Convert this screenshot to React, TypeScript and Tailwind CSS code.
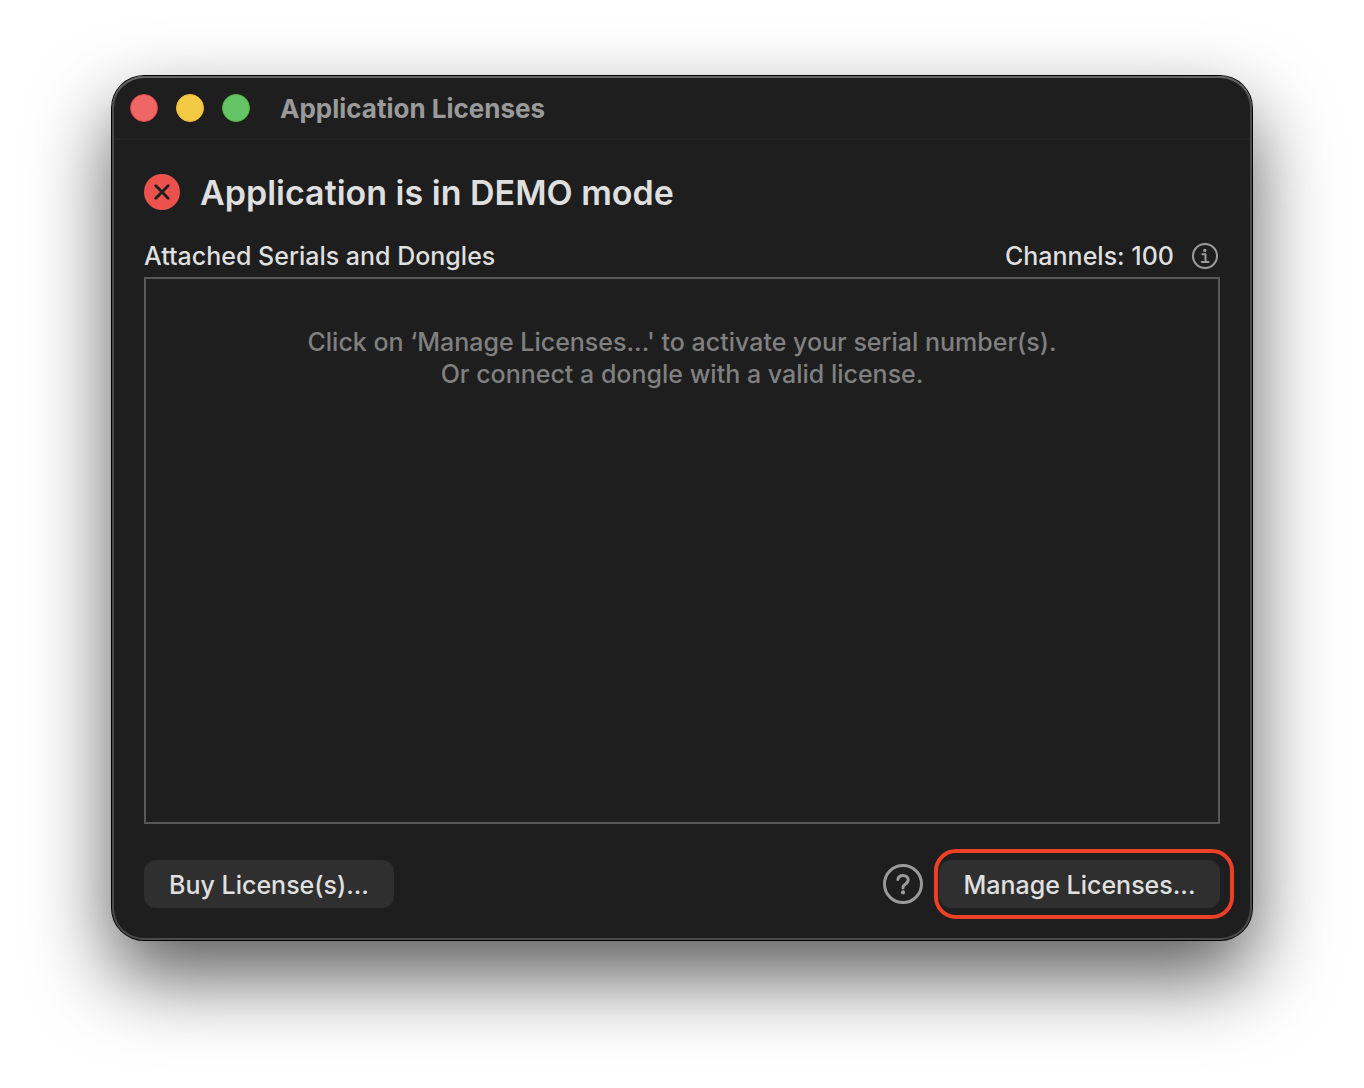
import React from 'react';

interface PushButtonProps {
  label: string;
  className?: string;
}

const trafficLights = [
  { label: 'Close', className: 'bg-[#ee6764] border-[#e0443e]' },
  { label: 'Minimize', className: 'bg-[#f4c943] border-[#efbd3b]' },
  { label: 'Zoom', className: 'bg-[#65c466] border-[#53b440]' },
];

const PushButton: React.FC<PushButtonProps> = ({ label, className = '' }) => (
  <button type="button" className={`h-12 rounded-xl bg-[#2f2f2f] pt-0.5 text-center whitespace-nowrap text-[#e0e0e0] ${className}`}>
    {label}
  </button>
);

const ErrorIcon: React.FC = () => (
  <svg viewBox="0 0 36 36" className="size-9 shrink-0" aria-hidden="true">
    <circle cx="18" cy="18" r="18" fill="#ec524d" />
    <path d="M11.8 11.8 L24.2 24.2 M24.2 11.8 L11.8 24.2" stroke="#1e1e1e" strokeWidth="2.8" strokeLinecap="round" />
  </svg>
);

const InfoIcon: React.FC = () => (
  <svg viewBox="0 0 26 26" className="size-[26px]" fill="none" aria-hidden="true">
    <circle cx="13" cy="13" r="12" stroke="#9c9c9c" strokeWidth="2" />
    <circle cx="12.8" cy="7.4" r="1.7" fill="#9c9c9c" />
    <path d="M10.4 11.2 H13.5 V19 M9.8 19.1 H16.6" stroke="#9c9c9c" strokeWidth="2" strokeLinecap="round" strokeLinejoin="round" />
  </svg>
);

const HelpIcon: React.FC = () => (
  <svg viewBox="0 0 40 40" className="size-10" fill="none" aria-hidden="true">
    <circle cx="20" cy="20" r="18.5" stroke="#9a9a9a" strokeWidth="3" />
    <path d="M14.9 15.6 C15.2 12.8 17.2 11.4 20 11.4 C23 11.4 25.2 13.1 25.2 15.8 C25.2 18 24 19.1 22.4 20.1 C20.7 21.1 20 21.9 20 23.6 V24" stroke="#9a9a9a" strokeWidth="3" strokeLinecap="round" strokeLinejoin="round" />
    <circle cx="20" cy="28.4" r="2.1" fill="#9a9a9a" />
  </svg>
);

const App: React.FC = () => {
  return (
    <div className="flex min-h-screen flex-col bg-white px-28 pt-19 pb-37 font-['Inter',sans-serif] text-[25px] leading-8 font-medium text-[#dfdfdf]">
      <div className="flex flex-1 flex-col rounded-[32px] bg-[#1e1e1e] shadow-[inset_0_2px_0_0_#666666,inset_0_0_0_2px_#4b4b4b,0_0_0_1px_#000000,0_36px_80px_rgba(0,0,0,0.65)]">
        <header className="mx-0.5 flex h-16 items-center border-b-2 border-[#232323] px-4 pt-0.5">
          <div className="flex gap-[18px]">
            {trafficLights.map(light => (
              <button key={light.label} type="button" aria-label={light.label} className={`size-7 rounded-full border ${light.className}`} />
            ))}
          </div>
          <h1 className="ml-[30px] pt-0.5 text-[26px] font-bold text-[#9a9a9a]">Application Licenses</h1>
        </header>

        <main className="flex flex-1 flex-col px-8 pt-[34px] pb-8">
          <div className="flex items-start gap-5">
            <ErrorIcon />
            <h2 className="text-[34px] leading-[38px] font-semibold">Application is in DEMO mode</h2>
          </div>

          <div className="mt-7 flex items-center justify-between">
            <h3 id="serials-heading">Attached Serials and Dongles</h3>
            <div className="flex items-center gap-[18px] pr-0.5">
              <span>Channels: 100</span>
              <button type="button" aria-label="Channel information">
                <InfoIcon />
              </button>
            </div>
          </div>

          <section aria-labelledby="serials-heading" className="mt-[5px] flex-1 border-2 border-[#585858] pt-[47px] text-center text-[#808080]">
            <p>Click on ‘Manage Licenses...' to activate your serial number(s).</p>
            <p>Or connect a dongle with a valid license.</p>
          </section>

          <footer className="mt-9 flex items-center justify-between">
            <PushButton label="Buy License(s)..." className="w-[250px]" />
            <div className="flex items-center gap-4">
              <button type="button" aria-label="Help">
                <HelpIcon />
              </button>
              <div className="relative">
                <PushButton label="Manage Licenses..." className="w-[281px]" />
                {/* highlight ring */}
                <span className="pointer-events-none absolute -top-[11px] -right-3.5 -bottom-[11px] -left-[5px] rounded-[22px] border-4 border-[#ee4026]" />
              </div>
            </div>
          </footer>
        </main>
      </div>
    </div>
  );
};

export default App;
